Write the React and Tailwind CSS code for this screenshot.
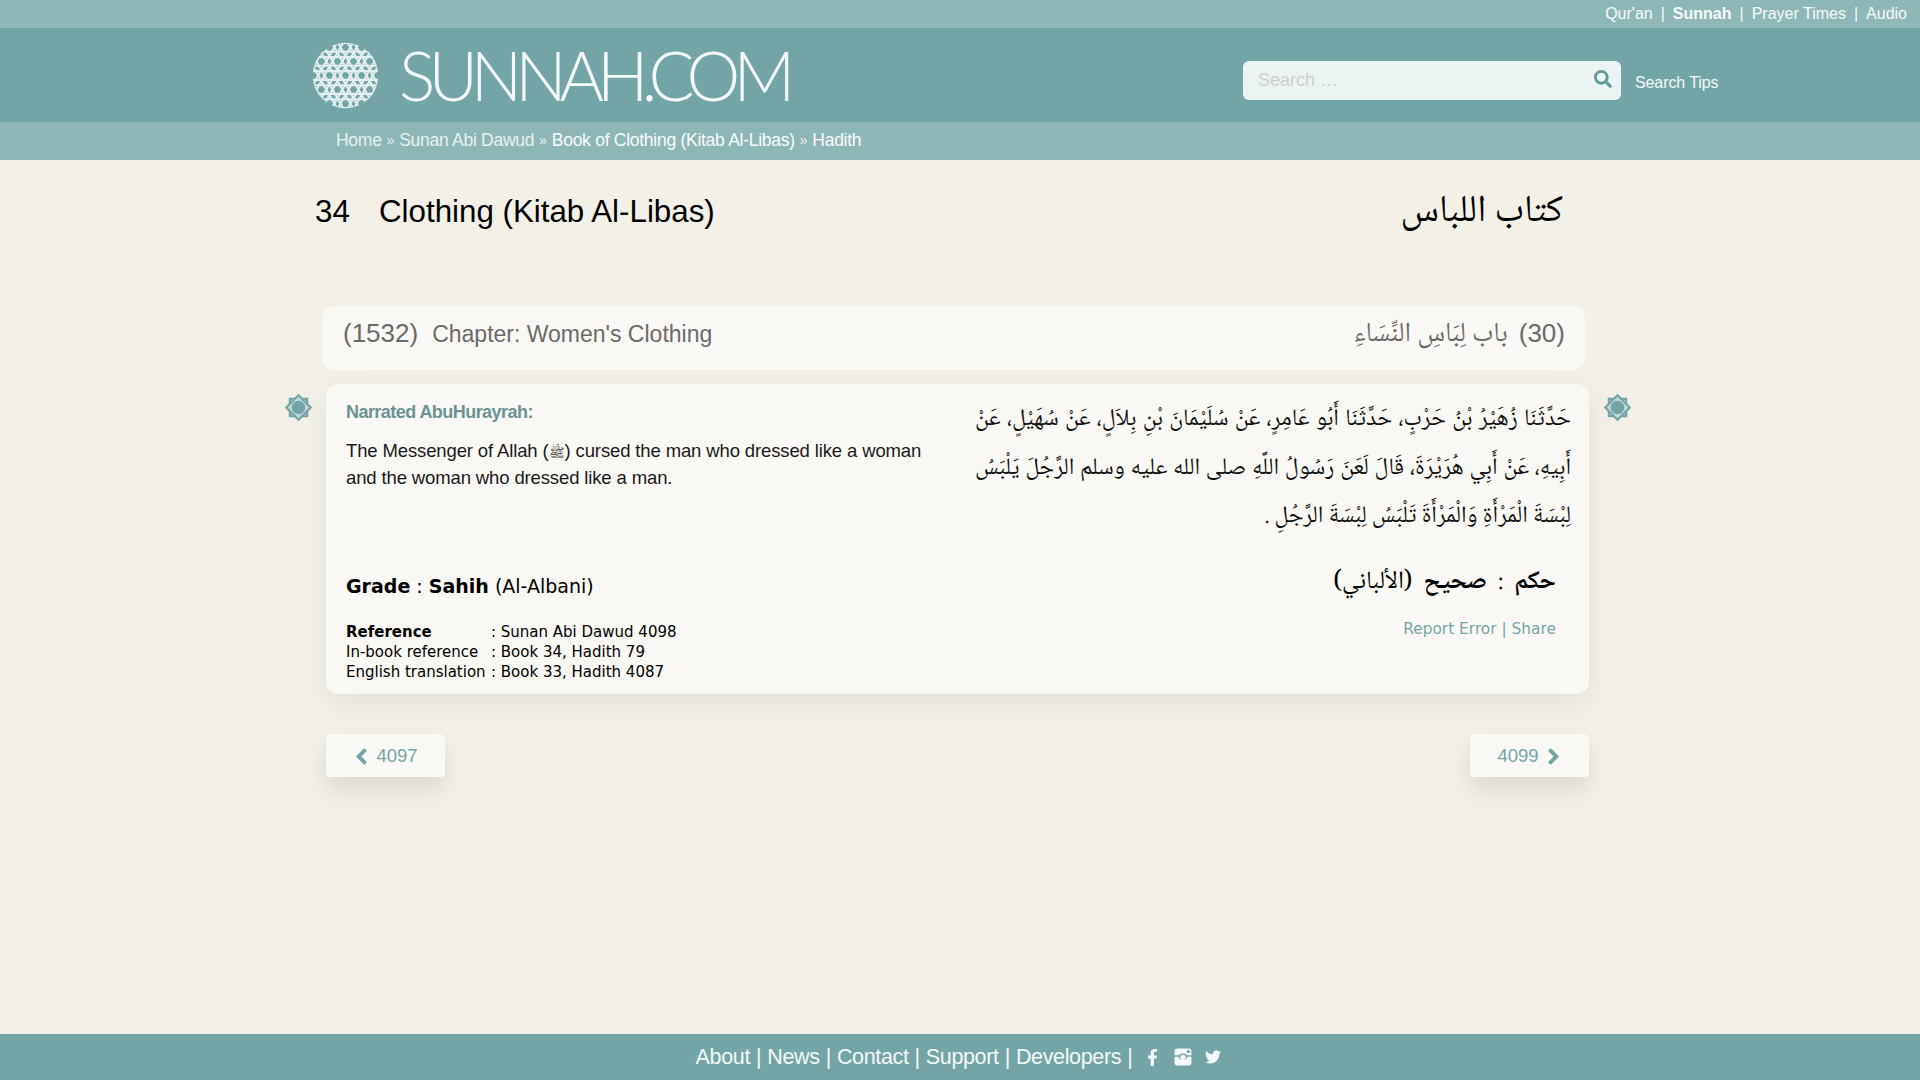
import React from "react";
import { FaSearch, FaChevronLeft, FaChevronRight, FaFacebookF, FaTwitter } from "react-icons/fa";

const sans = "font-['Liberation_Sans',Arial,sans-serif]";
const arabic = "font-['Noto_Naskh_Arabic','Liberation_Serif','DejaVu_Sans',serif]";

// lace ball next to the wordmark
const LogoBall = () => {
  const centers = [];
  for (let row = -2; row <= 2; row++) {
    for (let col = -2; col <= 2; col++) {
      centers.push([50 + (col + (row % 2 ? 0.5 : 0)) * 24, 50 + row * 21]);
    }
  }
  return (
    <svg viewBox="0 0 100 100" className="w-[67px] h-[67px] shrink-0">
      <defs>
        <clipPath id="ball">
          <circle cx="50" cy="50" r="49" />
        </clipPath>
      </defs>
      <g clipPath="url(#ball)" fill="none" stroke="#e4eeee" strokeWidth="3.2">
        {centers.map(([x, y]) => (
          <g key={`${x}-${y}`}>
            <polygon points={`${x},${y - 13} ${x + 11},${y + 6.5} ${x - 11},${y + 6.5}`} />
            <polygon points={`${x},${y + 13} ${x + 11},${y - 6.5} ${x - 11},${y - 6.5}`} />
          </g>
        ))}
      </g>
    </svg>
  );
};

const Rosette = () => (
  <svg viewBox="0 0 28 28" className="w-[27px] h-[27px] shrink-0">
    <g fill="#c3d9d9" stroke="#74a5a6" strokeWidth="2.2">
      <rect x="5" y="5" width="18" height="18" />
      <rect x="5" y="5" width="18" height="18" transform="rotate(45 14 14)" />
    </g>
    <circle cx="14" cy="14" r="7" fill="#74a5a6" />
  </svg>
);

const InstagramIcon = () => (
  <svg viewBox="0 0 16 16" className="w-[18px] h-[18px]" fill="#f4f8f8">
    <path d="M3 0.5h10a2.5 2.5 0 0 1 2.5 2.5v10a2.5 2.5 0 0 1-2.5 2.5H3A2.5 2.5 0 0 1 .5 13V3A2.5 2.5 0 0 1 3 .5zM.5 6.5v1.2h3.4a4.4 4.4 0 0 0 8.2 0h3.4V6.5H11.5a4.2 4.2 0 0 0-7 0z" fillRule="evenodd" />
    <circle cx="8" cy="8.3" r="2.4" />
    <rect x="11.5" y="2" width="2.5" height="2.5" fill="#74a5a6" />
  </svg>
);

const App = () => {
  return (
    <div className={`min-h-screen flex flex-col bg-[#f3f0e8] text-black ${sans}`}>
      {/* TOP LINKS */}
      <div className="h-[28px] bg-[#90b7b7] flex items-center justify-end pr-[13px] text-[16px] text-[#f6fafa]">
        <span>Qur'an</span>
        <span className="mx-[8px]">|</span>
        <span className="font-bold">Sunnah</span>
        <span className="mx-[8px]">|</span>
        <span>Prayer Times</span>
        <span className="mx-[8px]">|</span>
        <span>Audio</span>
      </div>

      {/* HEADER */}
      <div className="h-[94px] bg-[#74a5a6] flex items-center pl-[312px]">
        <LogoBall />
        <span className="ml-[20px] w-[402px] text-[#f4f8f8] text-[68px] leading-none font-['Lato',sans-serif] font-light tracking-[-7px]">
          SUNNAH.COM
        </span>
        <div className="ml-[442px] w-[378px] h-[39px] mt-[10px] rounded-[6px] bg-[#ebf3f3] flex items-center justify-between pl-[15px] pr-[9px]">
          <span className="text-[#cfcfcf] text-[18px]">Search …</span>
          <FaSearch className="text-[#5f9a9b] text-[18px] mb-[2px]" />
        </div>
        <span className="ml-[14px] mt-[15px] text-[16px] tracking-[-0.1px] text-[#f4f8f8]">Search Tips</span>
      </div>

      {/* BREADCRUMB */}
      <div className="h-[38px] bg-[#8fb6b6] flex items-center pl-[336px] pb-[2px] text-[17.5px] tracking-[-0.27px] text-[#e8f0f0]">
        <span>Home</span>
        <span className="mx-[5px] text-[14px]">»</span>
        <span>Sunan Abi Dawud</span>
        <span className="mx-[5px] text-[14px]">»</span>
        <span className="text-[#f8fbfb]">Book of Clothing (Kitab Al-Libas)</span>
        <span className="mx-[5px] text-[14px]">»</span>
        <span className="text-[#f8fbfb]">Hadith</span>
      </div>

      <main className="flex-1 pl-[285px]">
        {/* BOOK TITLE */}
        <div className="h-[146px] pl-[30px] pr-[357px] flex justify-between pt-[34px]">
          <div className="flex text-[31.3px] leading-[36px]">
            <span className="w-[64px]">34</span>
            <span>Clothing (Kitab Al-Libas)</span>
          </div>
          <div dir="rtl" className={`${arabic} text-[38px] leading-[36px] mt-[1px]`}>
            كتاب اللباس
          </div>
        </div>

        {/* CHAPTER */}
        <div className="ml-[37px] w-[1263px] h-[64px] rounded-[12px] bg-[#faf8f4] flex justify-between items-center pl-[21px] pr-[20px] pb-[9px] text-[#6a6a6a]">
          <div className="flex items-baseline">
            <span className="text-[26px] mr-[14px]">(1532)</span>
            <span className="text-[23px]">Chapter: Women's Clothing</span>
          </div>
          <div className="flex items-center">
            <span dir="rtl" className={`${arabic} text-[27.5px] leading-[36px] mt-[3px] mr-[11px]`}>
              باب لِبَاسِ النِّسَاءِ
            </span>
            <span className="text-[26px]">(30)</span>
          </div>
        </div>

        {/* HADITH */}
        <div className="mt-[14px] flex items-start">
          <div className="mt-[10px] mr-[14px]">
            <Rosette />
          </div>
          <div className="w-[1263px] h-[310px] rounded-[12px] bg-[#faf8f4] shadow-[0_8px_28px_rgba(0,0,0,0.07)] flex justify-between pl-[20px] pr-[18px] pt-[17px]">
            <div className="w-[590px] flex flex-col">
              <div className="text-[18px] font-bold tracking-[-0.55px] text-[#6c9293] leading-[22px]">
                Narrated AbuHurayrah:
              </div>
              <p className="mt-[14px] text-[18.5px] tracking-[-0.13px] leading-[27px] text-[#1a1a1a]">
                The Messenger of Allah (<span className="inline-block leading-none text-[13px]">ﷺ</span>) cursed the man who dressed like a woman and the woman who dressed like a man.
              </p>
              <div className="mt-[83px] text-[19px] leading-[24px] font-['DejaVu_Sans',sans-serif]">
                <b>Grade</b> : <b>Sahih</b> (Al-Albani)
              </div>
              <div className="mt-[24px] text-[15px] leading-[20px] font-['DejaVu_Sans',sans-serif]">
                <div className="flex">
                  <b className="w-[145px]">Reference</b>
                  <span>: Sunan Abi Dawud 4098</span>
                </div>
                <div className="flex">
                  <span className="w-[145px]">In-book reference</span>
                  <span>: Book 34, Hadith 79</span>
                </div>
                <div className="flex">
                  <span className="w-[145px]">English translation</span>
                  <span>: Book 33, Hadith 4087</span>
                </div>
              </div>
            </div>

            <div className="w-[596px] flex flex-col -mt-[5px]">
              <p dir="rtl" className={`${arabic} text-[23.5px] leading-[48.5px] text-justify text-[#111]`}>
                حَدَّثَنَا زُهَيْرُ بْنُ حَرْبٍ، حَدَّثَنَا أَبُو عَامِرٍ، عَنْ سُلَيْمَانَ بْنِ بِلاَلٍ، عَنْ سُهَيْلٍ، عَنْ أَبِيهِ، عَنْ أَبِي هُرَيْرَةَ، قَالَ لَعَنَ رَسُولُ اللَّهِ صلى الله عليه وسلم الرَّجُلَ يَلْبَسُ لِبْسَةَ الْمَرْأَةِ وَالْمَرْأَةَ تَلْبَسُ لِبْسَةَ الرَّجُلِ .
              </p>
              <div dir="rtl" className={`${arabic} mt-[23px] pr-[15px] text-[25px] leading-[36px]`}>
                <b>حكم</b> &nbsp;:&nbsp; <b>صحيح</b> &nbsp;(الألباني)
              </div>
              <div className="mt-[17px] pr-[15px] text-right text-[15.4px] font-['DejaVu_Sans',sans-serif] text-[#74a5a6]">
                Report Error | Share
              </div>
            </div>
          </div>
          <div className="mt-[10px] ml-[15px]">
            <Rosette />
          </div>
        </div>

        {/* PREV / NEXT */}
        <div className="mt-[40px] ml-[41px] w-[1263px] flex justify-between text-[18.5px] text-[#74a5a6]">
          <div className="w-[119px] h-[43px] pt-[1px] rounded-[4px] bg-[#faf8f4] shadow-[0_12px_24px_rgba(0,0,0,0.1)] flex items-center justify-center gap-[6px]">
            <FaChevronLeft className="text-[17px] [stroke-width:40px]" />
            <span>4097</span>
          </div>
          <div className="w-[119px] h-[43px] pt-[1px] rounded-[4px] bg-[#faf8f4] shadow-[0_12px_24px_rgba(0,0,0,0.1)] flex items-center justify-center gap-[6px]">
            <span>4099</span>
            <FaChevronRight className="text-[17px] [stroke-width:40px]" />
          </div>
        </div>
      </main>

      {/* FOOTER */}
      <div className="h-[46px] bg-[#74a5a6] flex items-center justify-center pr-[3px] text-[21.5px] tracking-[-0.35px] text-[#f4f8f8]">
        <span>About</span>
        <span className="mx-[6px]">|</span>
        <span>News</span>
        <span className="mx-[6px]">|</span>
        <span>Contact</span>
        <span className="mx-[6px]">|</span>
        <span>Support</span>
        <span className="mx-[6px]">|</span>
        <span>Developers</span>
        <span className="ml-[6px] mr-[12px]">|</span>
        <FaFacebookF className="text-[17px]" />
        <span className="ml-[13px]">
          <InstagramIcon />
        </span>
        <FaTwitter className="ml-[13px] text-[16px]" />
      </div>
    </div>
  );
};

export default App;
